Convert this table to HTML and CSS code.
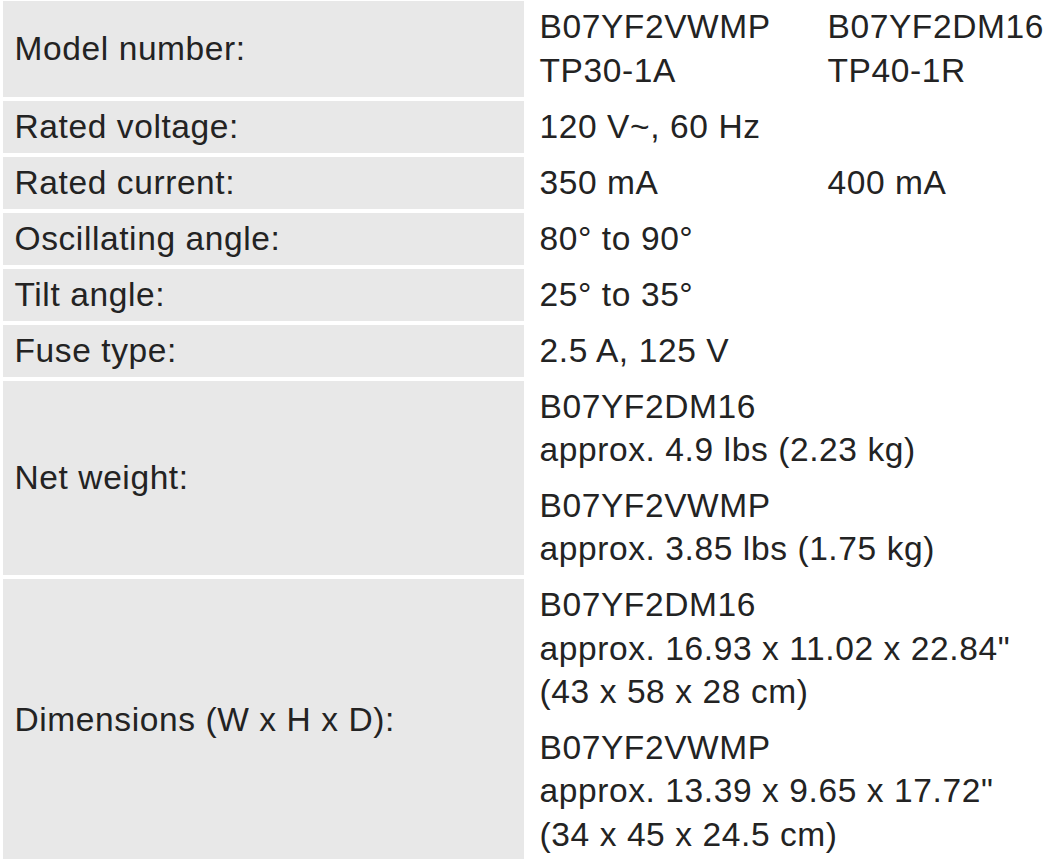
FILE: index.html
```html
<!DOCTYPE html>
<html lang="en">
<head>
<meta charset="utf-8">
<title>Specifications</title>
<link rel="stylesheet" href="styles.css">
</head>
<body>
<div class="spec">
  <div class="label">Model number:</div>
  <div class="value two">
    <div>B07YF2VWMP<br>TP30-1A</div>
    <div>B07YF2DM16<br>TP40-1R</div>
  </div>

  <div class="label">Rated voltage:</div>
  <div class="value">120 V~, 60 Hz</div>

  <div class="label">Rated current:</div>
  <div class="value two">
    <div>350 mA</div>
    <div>400 mA</div>
  </div>

  <div class="label">Oscillating angle:</div>
  <div class="value">80° to 90°</div>

  <div class="label">Tilt angle:</div>
  <div class="value">25° to 35°</div>

  <div class="label">Fuse type:</div>
  <div class="value">2.5 A, 125 V</div>

  <div class="label">Net weight:</div>
  <div class="value stack">
    <p>B07YF2DM16<br>approx. 4.9 lbs (2.23 kg)</p>
    <p>B07YF2VWMP<br>approx. 3.85 lbs (1.75 kg)</p>
  </div>

  <div class="label">Dimensions (W x H x D):</div>
  <div class="value stack">
    <p>B07YF2DM16<br>approx. 16.93 x 11.02 x 22.84"<br>(43 x 58 x 28 cm)</p>
    <p>B07YF2VWMP<br>approx. 13.39 x 9.65 x 17.72"<br>(34 x 45 x 24.5 cm)</p>
  </div>
</div>
</body>
</html>
```

FILE: styles.css
```css
html, body {
  margin: 0;
  padding: 0;
  background: #ffffff;
}

body {
  font-family: "Liberation Sans", Arial, sans-serif;
  font-size: 33.5px;
  line-height: 43.5px;
  color: #232323;
  letter-spacing: 0.6px;
}

.spec {
  display: grid;
  grid-template-columns: 521px 1fr;
  row-gap: 4px;
  margin: 1px 0 0 3px;
}

.label {
  background: #e8e8e8;
  display: flex;
  align-items: center;
  padding: 4px 0 4.5px 11.5px;
}

.value {
  padding: 4px 0 4.5px 15.5px;
}

.two {
  display: grid;
  grid-template-columns: 288px 1fr;
}

.stack {
  display: flex;
  flex-direction: column;
  gap: 12px;
}

.stack p {
  margin: 0;
}
```
